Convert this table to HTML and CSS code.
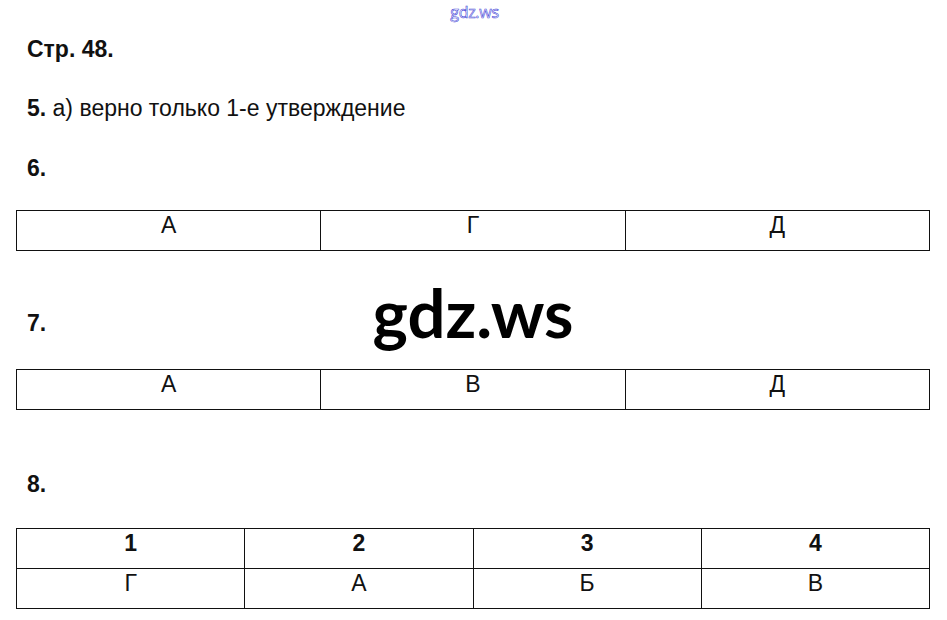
FILE: index.html
```html
<html>
<head>
	<meta charset="utf-8">
	<meta name="viewport" content="width=device-width, initial-scale=1">
	<title>Стр. 48</title>
	<link rel="stylesheet" href="styles.css">
</head>
<body>

	<div class="mark">gdz.ws</div>

	<main class="page">
		<p class="line head"><b>Стр. 48.</b></p>
		<p class="line q5"><b>5.</b> а) верно только 1-е утверждение</p>
		<p class="line q6"><b>6.</b></p>

		<table class="answers t6">
			<tr>
				<td>А</td>
				<td>Г</td>
				<td>Д</td>
			</tr>
		</table>

		<div class="row7">
			<p class="line"><b>7.</b></p>
			<div class="logo">gdz.ws</div>
		</div>

		<table class="answers t7">
			<tr>
				<td>А</td>
				<td>В</td>
				<td>Д</td>
			</tr>
		</table>

		<p class="line q8"><b>8.</b></p>

		<table class="answers t8">
			<tr>
				<th>1</th>
				<th>2</th>
				<th>3</th>
				<th>4</th>
			</tr>
			<tr>
				<td>Г</td>
				<td>А</td>
				<td>Б</td>
				<td>В</td>
			</tr>
		</table>
	</main>

</body>
</html>
```

FILE: styles.css
```css
*{
	box-sizing: border-box;
	padding: 0;
	margin: 0;
}
body
{
	background: #fff;
	color: #111;
	font-family: "Liberation Sans", Arial, sans-serif;
	font-size: 23px;
}
.mark
{
	text-align: center;
	padding-top: 1px;
	padding-left: 2px;
	height: 22px;
	font-family: "Open Sans", sans-serif;
	font-size: 16px;
	color: #fff;
	-webkit-text-stroke: 0.6px #4848d8;
	letter-spacing: -0.3px;
}
.page
{
	padding: 14px 17px 0 16px;
}
.line
{
	line-height: 26px;
	padding-left: 11px;
}
.q5
{
	margin-top: 33px;
}
.q6
{
	margin-top: 34px;
}
.answers
{
	width: 914px;
	border-collapse: collapse;
	table-layout: fixed;
	font-size: 23px;
}
.answers td,
.answers th
{
	border: 1px solid #111;
	text-align: center;
	vertical-align: top;
	height: 40px;
	padding-top: 1px;
	line-height: 26px;
	font-weight: normal;
}
.answers th
{
	font-weight: bold;
}
.t6
{
	margin-top: 29px;
}
.row7
{
	position: relative;
	margin-top: 59px;
}
.logo
{
	position: absolute;
	left: 352px;
	top: -33px;
	width: 210px;
	text-align: center;
	font-family: Lato, sans-serif;
	font-weight: bold;
	font-size: 67px;
	line-height: 70px;
	color: #000;
}
.t7
{
	margin-top: 33px;
}
.q8
{
	margin-top: 61px;
}
.t8
{
	margin-top: 31px;
}
```
